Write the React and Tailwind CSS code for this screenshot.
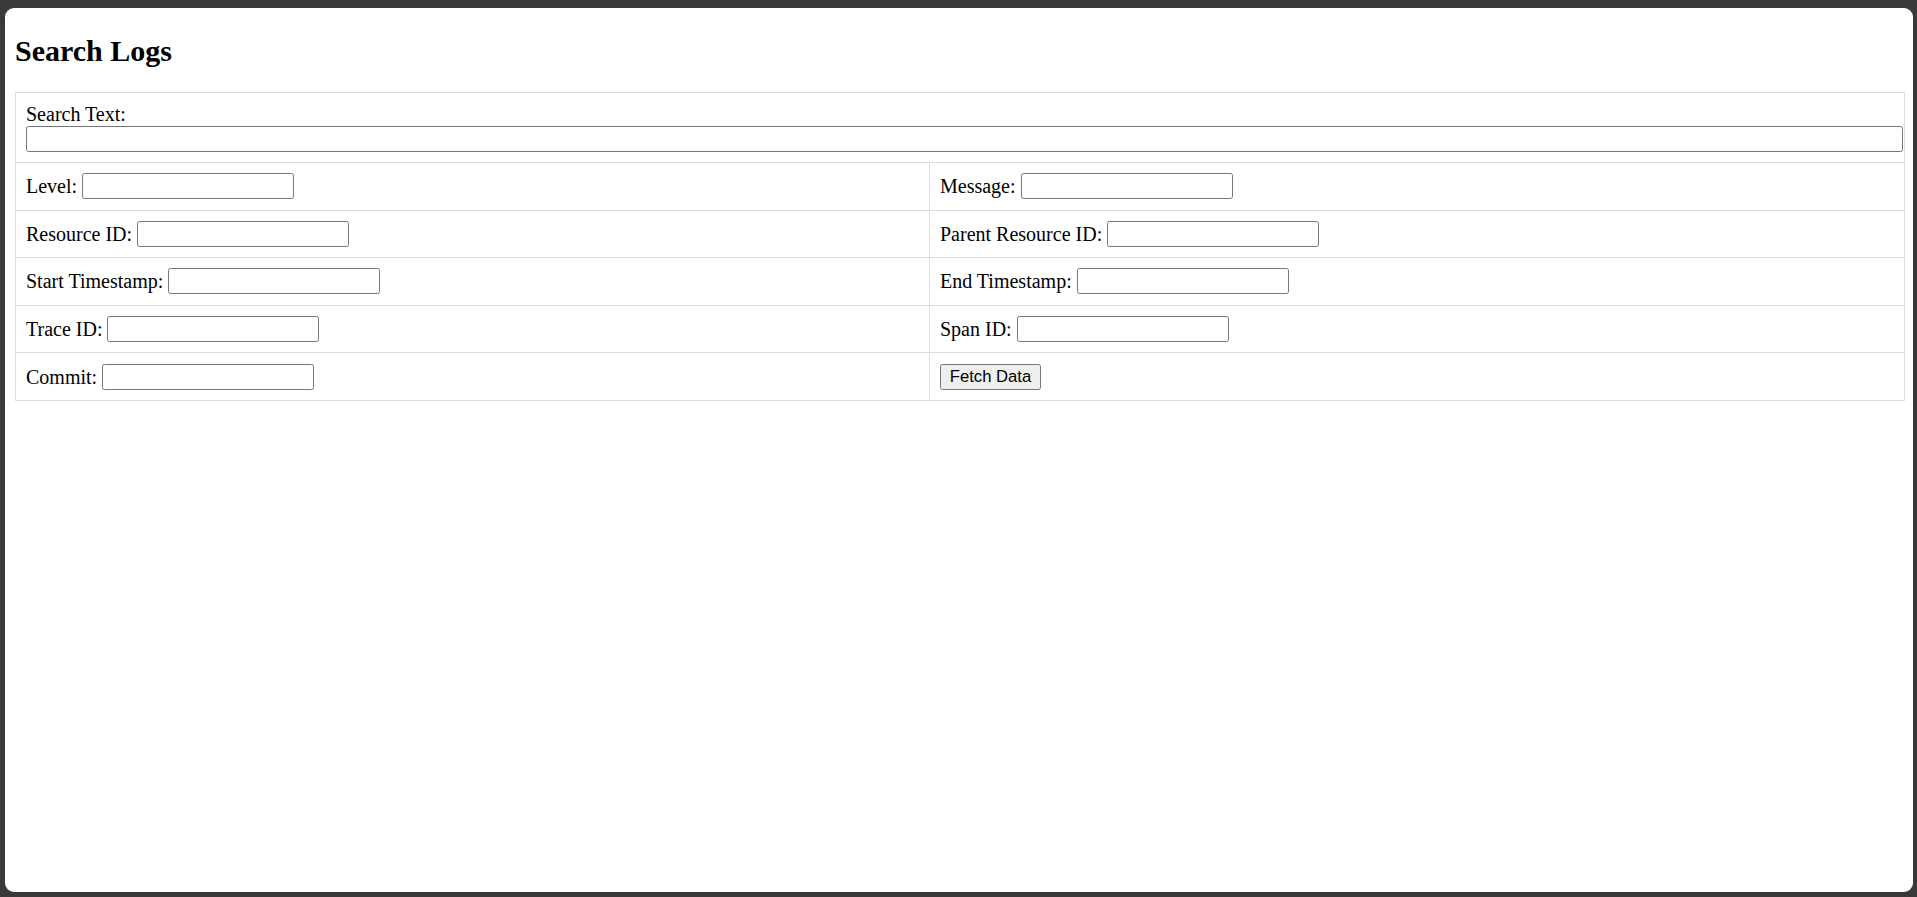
import React from "react";

const inputCls =
  "w-[212px] h-[26px] border border-[#767676] rounded-[2.5px] bg-white px-[3px] text-[16.67px] align-middle [font-family:'Liberation_Sans',Arial,sans-serif]";

function Field({ label }) {
  return (
    <div className="px-[10px] h-[46.6px] flex items-center">
      <label className="flex items-center">
        <span>{label}:</span>
        <input type="text" className={inputCls + " ml-[5px]"} />
      </label>
    </div>
  );
}

const rows = [
  ["Level", "Message"],
  ["Resource ID", "Parent Resource ID"],
  ["Start Timestamp", "End Timestamp"],
  ["Trace ID", "Span ID"],
];

export default function App() {
  return (
    <div className="w-[1917px] h-[897px] bg-[#393939] pt-[8px] pl-[5px] pr-[4px] pb-[5px] [font-family:'Liberation_Serif','Times_New_Roman',serif] text-[20px] text-black">
      <div className="w-full h-full bg-white rounded-[9px] px-[10px] pt-[26px]">
        <h2 className="text-[30px] font-bold leading-[33px] mb-[25px]">Search Logs</h2>
        <div className="w-[1890px] border border-[#dddddd]">
          <div className="px-[10px] pt-[10px] pb-[10px] h-[69px]">
            <div className="leading-[23px]">Search Text:</div>
            <input type="text" className="block w-[1877px] h-[26px] border border-[#767676] rounded-[2.5px] bg-white" />
          </div>
          {rows.map(([a, b]) => (
            <div key={a} className="grid grid-cols-[913px_1fr] border-t border-[#dddddd]">
              <Field label={a} />
              <div className="border-l border-[#dddddd]">
                <Field label={b} />
              </div>
            </div>
          ))}
          <div className="grid grid-cols-[913px_1fr] border-t border-[#dddddd]">
            <Field label="Commit" />
            <div className="border-l border-[#dddddd] px-[10px] h-[46.6px] flex items-center">
              <button className="w-[101px] h-[26px] bg-[#efefef] border border-[#767676] rounded-[2.5px] text-[16.67px] leading-none pt-[1px] [font-family:'Liberation_Sans',Arial,sans-serif] text-black">
                Fetch Data
              </button>
            </div>
          </div>
        </div>
      </div>
    </div>
  );
}
